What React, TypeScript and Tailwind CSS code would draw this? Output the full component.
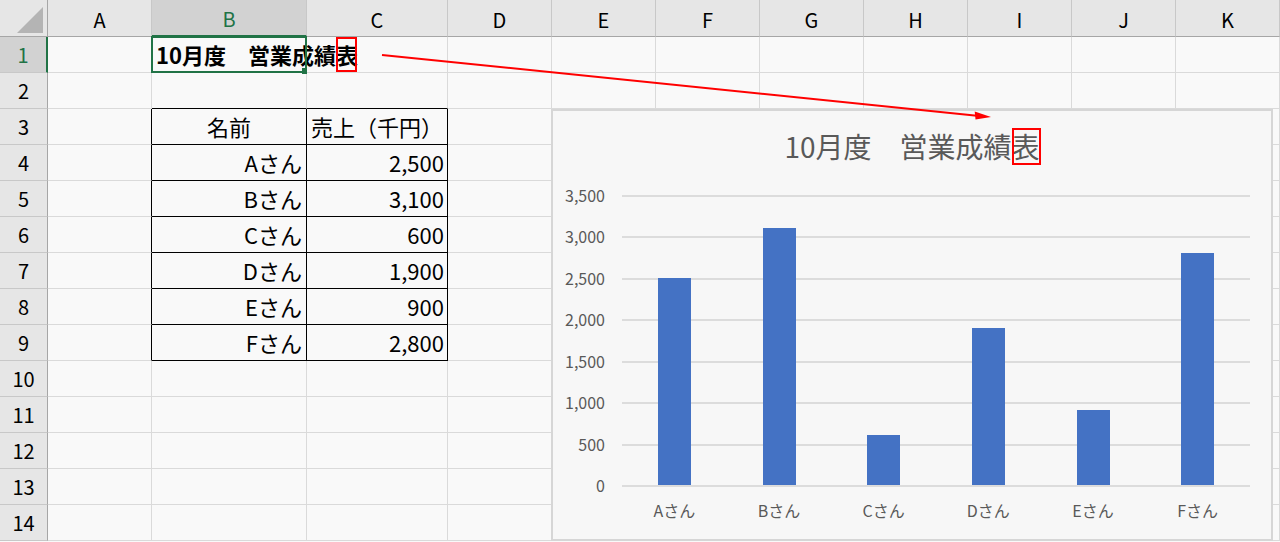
import React from 'react';

const cols = ['A', 'B', 'C', 'D', 'E', 'F', 'G', 'H', 'I', 'J', 'K'];
const rows = Array.from({ length: 14 }, (_, i) => i + 1);

const sales = [
  { name: 'Aさん', value: 2500, label: '2,500' },
  { name: 'Bさん', value: 3100, label: '3,100' },
  { name: 'Cさん', value: 600, label: '600' },
  { name: 'Dさん', value: 1900, label: '1,900' },
  { name: 'Eさん', value: 900, label: '900' },
  { name: 'Fさん', value: 2800, label: '2,800' },
];

const yTicks = ['3,500', '3,000', '2,500', '2,000', '1,500', '1,000', '500', '0'];
const PLOT_H = 290;
const Y_MAX = 3500;

// borders: the B3:C9 table gets black lines, everything else the light grid
function cellBorder(r: number, c: number) {
  const tableRow = r >= 3 && r <= 9;
  if (tableRow && (c === 1 || c === 2)) return 'border-r border-b border-r-black border-b-black';
  if (tableRow && c === 0) return 'border-r border-b border-r-black border-b-[#dadada]';
  if (r === 2 && (c === 1 || c === 2)) return 'border-r border-b border-r-[#dadada] border-b-black';
  return 'border-r border-b border-[#dadada]';
}

function CellContent({ r, c }: { r: number; c: number }) {
  if (r === 1 && c === 1) {
    return (
      <div className="relative z-10 h-full">
        <div className="flex h-full items-center whitespace-nowrap pl-[4px] text-[22px] font-bold leading-[35px] text-black">
          10月度　営業成績
          <span className="relative inline-block">
            表
            <span className="absolute inset-y-0 left-0 w-[21px] border-2 border-[#ff0000]" />
          </span>
        </div>
        <div className="pointer-events-none absolute -top-[1px] -left-[1px] -right-[1px] -bottom-[1px] border-2 border-[#217346]">
          <div className="absolute right-[-2px] bottom-[-3px] h-[6px] w-[5px] bg-[#217346]" />
        </div>
      </div>
    );
  }
  if (r === 3 && c === 1) return <div className="flex h-full items-center justify-center text-[22px] text-black">名前</div>;
  if (r === 3 && c === 2) return <div className="flex h-full items-center pl-[4px] text-[22px] whitespace-nowrap text-black">売上（千円）</div>;
  if (r >= 4 && r <= 9) {
    const row = sales[r - 4];
    if (c === 1) return <div className="flex h-full items-center justify-end pr-[4px] text-[22px] text-black">{row.name}</div>;
    if (c === 2) return <div className="flex h-full items-center justify-end pr-[3px] text-[22px] text-black">{row.label}</div>;
  }
  return null;
}

function Chart() {
  return (
    <div className="absolute left-[551px] top-[109px] flex h-[432px] w-[722px] flex-col border-2 border-[#d6d6d6] bg-[#f7f7f7] text-[#595959]">
      <div className="pt-[17px] text-center text-[28px] leading-[37px]">
        10月度　営業成績
        <span className="relative inline-block">
          表
          <span className="absolute inset-y-0 left-0 -right-[1px] border-2 border-[#ff0000]" />
        </span>
      </div>

      <div className="mt-[30px] flex">
        <div className="-mt-[10px] flex h-[310px] w-[52px] flex-col justify-between text-right text-[16px]">
          {yTicks.map((t) => (
            <div key={t} className="h-[20px] leading-[20px]">{t}</div>
          ))}
        </div>
        <div className="ml-[17px] w-[628px]">
          <div className="relative h-[292px]">
            <div className="flex h-full flex-col justify-between">
              {yTicks.map((t) => (
                <div key={t} className="h-[2px] bg-[#dcdcdc]" />
              ))}
            </div>
            <div className="absolute inset-x-0 top-0 bottom-[2px] flex items-end">
              {sales.map((s) => (
                <div key={s.name} className="flex flex-1 justify-center">
                  <div className="w-[33px] bg-[#4472c4]" style={{ height: (s.value / Y_MAX) * PLOT_H }} />
                </div>
              ))}
            </div>
          </div>
          <div className="mt-[13px] flex">
            {sales.map((s) => (
              <div key={s.name} className="flex-1 text-center text-[16px] leading-[20px]">{s.name}</div>
            ))}
          </div>
        </div>
      </div>
    </div>
  );
}

export default function App() {
  return (
    <div className="relative h-[542px] w-[1280px] overflow-hidden bg-[#f9f9f9] font-['Noto_Sans_CJK_JP',sans-serif]">
      <div className="grid grid-cols-[48px_104px_155px_141px_104px_104px_104px_104px_104px_104px_104px_104px] grid-rows-[37px_repeat(14,36px)]">
        {/* corner */}
        <div className="relative border-r border-b border-r-[#a6a6a6] border-b-[#a6a6a6] bg-[#e6e6e6]">
          <svg className="absolute left-0 top-0" width="47" height="36" viewBox="0 0 47 36">
            <polygon points="17,33 43,33 43,7" fill="#b4b4b4" />
          </svg>
        </div>
        {cols.map((c, i) =>
          i === 1 ? (
            <div key={c} className="flex items-center justify-center border-r border-b-2 border-r-[#c8c8c8] border-b-[#217346] bg-[#d2d2d2] pt-[3px] text-[20px] text-[#217346]">
              {c}
            </div>
          ) : (
            <div key={c} className="flex items-center justify-center border-r border-b border-r-[#c8c8c8] border-b-[#a6a6a6] bg-[#e6e6e6] pt-[3px] text-[20px] text-black">
              {c}
            </div>
          )
        )}
        {rows.map((r) => (
          <React.Fragment key={r}>
            {r === 1 ? (
              <div className="flex items-center justify-center border-r-2 border-b border-r-[#217346] border-b-[#c8c8c8] bg-[#d2d2d2] text-[20px] text-[#217346]">
                {r}
              </div>
            ) : (
              <div className="flex items-center justify-center border-r border-b border-r-[#a6a6a6] border-b-[#c8c8c8] bg-[#e6e6e6] text-[20px] text-black">
                {r}
              </div>
            )}
            {cols.map((c, ci) => (
              <div key={c} className={r === 1 && ci === 1 ? 'relative z-10 ' + cellBorder(r, ci) : cellBorder(r, ci)}>
                <CellContent r={r} c={ci} />
              </div>
            ))}
          </React.Fragment>
        ))}
      </div>

      <Chart />

      <svg className="pointer-events-none absolute left-0 top-0" width="1280" height="542" viewBox="0 0 1280 542">
        <line x1="382" y1="55" x2="977" y2="115.7" stroke="#ff0000" strokeWidth="2" />
        <polygon points="991,117 974.7,111.4 975.5,119.4" fill="#ff0000" />
      </svg>
    </div>
  );
}
